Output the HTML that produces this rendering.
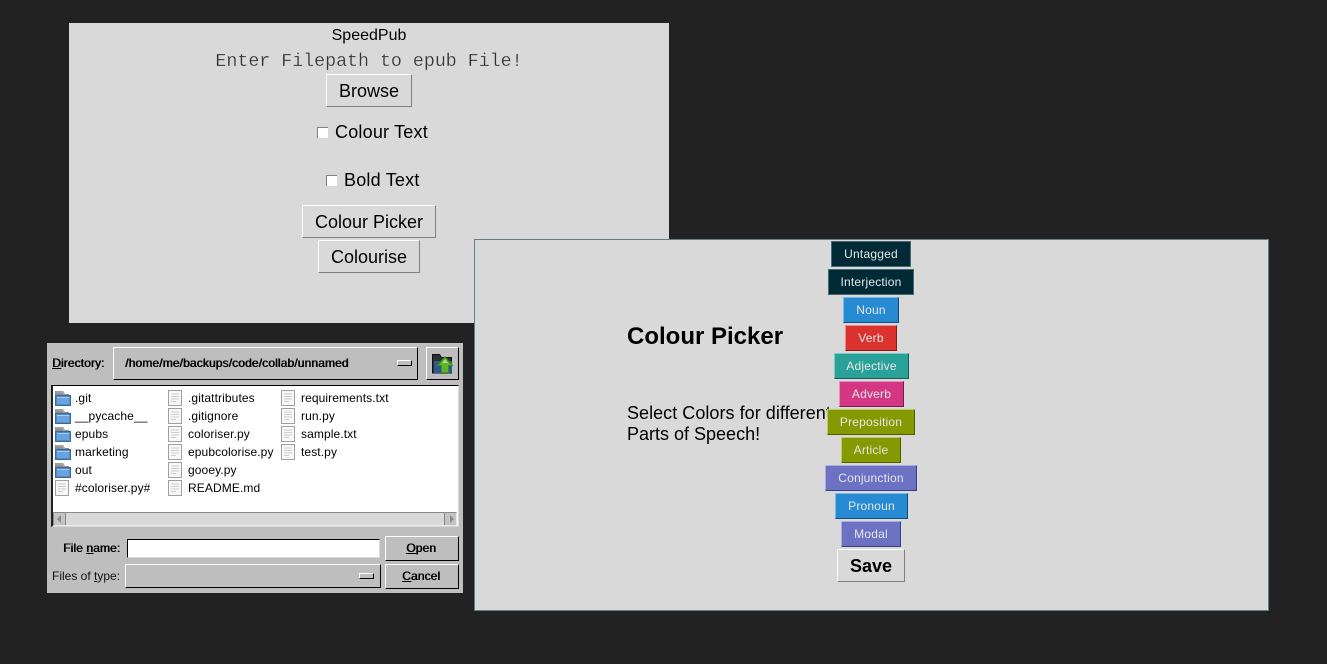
<!DOCTYPE html>
<html><head><meta charset="utf-8">
<style>
html,body{margin:0;padding:0;width:1327px;height:664px;overflow:hidden;background:#222222;}
body{position:relative;font-family:"Liberation Sans",sans-serif;color:#000;}
.a{position:absolute;box-sizing:border-box;white-space:nowrap;}
.win{background:#d9d9d9;}
.b{position:absolute;box-sizing:border-box;text-align:center;background:#d9d9d9;border:1px solid;border-color:#fff #7f7f7f #7f7f7f #fff;font-size:18px;color:#000;}
.c{position:absolute;box-sizing:border-box;width:80px;height:26px;line-height:24px;text-align:center;font-size:12px;color:#e6e6e6;border:1px solid;letter-spacing:.2px;}
.dl{position:absolute;box-sizing:border-box;background:#bebebe;border:1px solid;border-color:#fff #000 #000 #fff;}
.t{position:absolute;font-size:12px;line-height:14px;color:#000;white-space:nowrap;letter-spacing:.1px;}
.o{text-shadow:.6px 0 0 #000;}
.u{text-decoration:underline;}
.cb{position:absolute;width:11px;height:11px;box-sizing:border-box;background:#fff;border-top:1px solid #808080;border-left:1px solid #808080;}
.ind{position:absolute;width:15px;height:6px;box-sizing:border-box;border:1px solid;border-color:#fff #000 #000 #fff;background:#bebebe;}
svg{position:absolute;}
</style></head><body>
<svg width="0" height="0" style="position:absolute">
<symbol id="fo" viewBox="0 0 16 16"><path d="M0 15V1h8l2 3h4v3H0z" fill="#8f8f8f"/><path d="M1 2h6.500l2 3" fill="none" stroke="#b5b5b5"/><rect x=".5" y="5.500" width="15" height="10" fill="#4c8ccd" stroke="#3d6a99"/><rect x="2" y="7" width="12" height="7" fill="#6aa3dd"/><rect x="2" y="7" width="12" height="1" fill="#a9cbec"/></symbol>
<symbol id="fi" viewBox="0 0 14 16"><rect x=".5" y=".5" width="13" height="15" fill="#f8f8f8" stroke="#a0a0a0"/><path d="M3 4h8M3 6.500h8M3 9h8M3 11.500h5" stroke="#cdcdcd" fill="none"/></symbol>
</svg>

<!-- Main window -->
<div class="a win" style="left:69px;top:23px;width:600px;height:300px;"></div>
<div class="a" style="left:69px;width:600px;top:26px;text-align:center;font-size:16px;line-height:20px;">SpeedPub</div>
<div class="a" style="left:69px;width:600px;top:51px;text-align:center;font-family:'Liberation Mono',monospace;font-size:18.300px;line-height:22px;color:#333;-webkit-text-stroke:.25px #d9d9d9;">Enter Filepath to epub File!</div>
<div class="b" style="left:326px;top:74px;width:86px;height:33px;line-height:32px;">Browse</div>
<div class="cb" style="left:317px;top:127px;"></div>
<div class="a" style="left:335px;top:121px;font-size:18px;line-height:22px;letter-spacing:.2px;">Colour Text</div>
<div class="cb" style="left:326px;top:175px;"></div>
<div class="a" style="left:344px;top:169px;font-size:18px;line-height:22px;letter-spacing:.2px;">Bold Text</div>
<div class="b" style="left:302px;top:205px;width:134px;height:33px;line-height:32px;">Colour Picker</div>
<div class="b" style="left:318px;top:240px;width:102px;height:33px;line-height:32px;">Colourise</div>

<!-- File dialog -->
<div class="a" style="left:47px;top:343px;width:416px;height:250px;background:#bebebe;"></div>
<div class="t o" style="left:52px;top:356px;"><span class="u">D</span>irectory:</div>
<div class="dl" style="left:113px;top:347px;width:305px;height:33px;"></div>
<div class="t o" style="left:125px;top:356px;letter-spacing:.13px;">/home/me/backups/code/collab/unnamed</div>
<div class="ind" style="left:397px;top:360px;"></div>
<div class="dl" style="left:426px;top:347px;width:33px;height:33px;"></div>
<svg style="left:432px;top:353px;" width="22" height="22" viewBox="0 0 22 22"><path d="M.5 20V1.500h7l2 3h10v15.500z" fill="#2b2f36" stroke="#111"/><rect x="2" y="8" width="18" height="12" fill="#2a5a90"/><path d="M13 3l8.500 10H17v7H9v-7H4.500z" fill="#3b8f18"/><path d="M13 5l6 7h-3v7h-6v-7H7z" fill="#5eb52a"/><path d="M13 6l3 4h-6z" fill="#a9e07f"/></svg>

<div class="a" style="left:51px;top:385px;width:408px;height:142px;background:#fff;border-style:solid;border-width:1px 1px 1px 2px;border-color:#000 #d9d9d9 #d9d9d9 #222;"></div>
<!-- col 1 -->
<svg style="left:55px;top:390px" width="16" height="16"><use href="#fo"/></svg><div class="t" style="left:75px;top:391px;">.git</div>
<svg style="left:55px;top:408px" width="16" height="16"><use href="#fo"/></svg><div class="t" style="left:75px;top:409px;">__pycache__</div>
<svg style="left:55px;top:426px" width="16" height="16"><use href="#fo"/></svg><div class="t" style="left:75px;top:427px;">epubs</div>
<svg style="left:55px;top:444px" width="16" height="16"><use href="#fo"/></svg><div class="t" style="left:75px;top:445px;">marketing</div>
<svg style="left:55px;top:462px" width="16" height="16"><use href="#fo"/></svg><div class="t" style="left:75px;top:463px;">out</div>
<svg style="left:55px;top:480px" width="14" height="16"><use href="#fi"/></svg><div class="t" style="left:75px;top:481px;">#coloriser.py#</div>
<!-- col 2 -->
<svg style="left:168px;top:390px" width="14" height="16"><use href="#fi"/></svg><div class="t" style="left:188px;top:391px;">.gitattributes</div>
<svg style="left:168px;top:408px" width="14" height="16"><use href="#fi"/></svg><div class="t" style="left:188px;top:409px;">.gitignore</div>
<svg style="left:168px;top:426px" width="14" height="16"><use href="#fi"/></svg><div class="t" style="left:188px;top:427px;">coloriser.py</div>
<svg style="left:168px;top:444px" width="14" height="16"><use href="#fi"/></svg><div class="t" style="left:188px;top:445px;">epubcolorise.py</div>
<svg style="left:168px;top:462px" width="14" height="16"><use href="#fi"/></svg><div class="t" style="left:188px;top:463px;">gooey.py</div>
<svg style="left:168px;top:480px" width="14" height="16"><use href="#fi"/></svg><div class="t" style="left:188px;top:481px;">README.md</div>
<!-- col 3 -->
<svg style="left:281px;top:390px" width="14" height="16"><use href="#fi"/></svg><div class="t" style="left:301px;top:391px;">requirements.txt</div>
<svg style="left:281px;top:408px" width="14" height="16"><use href="#fi"/></svg><div class="t" style="left:301px;top:409px;">run.py</div>
<svg style="left:281px;top:426px" width="14" height="16"><use href="#fi"/></svg><div class="t" style="left:301px;top:427px;">sample.txt</div>
<svg style="left:281px;top:444px" width="14" height="16"><use href="#fi"/></svg><div class="t" style="left:301px;top:445px;">test.py</div>
<!-- scrollbar -->
<div class="a" style="left:53px;top:512px;width:404px;height:14px;background:#c4c4c4;border:1px solid;border-color:#8a8a8a #e8e8e8 #e8e8e8 #8a8a8a;"></div>
<div class="a" style="left:65px;top:513px;width:380px;height:12px;background:#d9d9d9;border-left:1px solid #888;border-right:1px solid #888;"></div>
<svg style="left:55px;top:514px" width="9" height="10"><path d="M6 1v8L2 5z" fill="#8a8a8a"/></svg>
<svg style="left:447px;top:514px" width="9" height="10"><path d="M3 1v8l4-4z" fill="#8a8a8a"/></svg>

<div class="t o" style="left:63px;top:541px;">File <span class="u">n</span>ame:</div>
<div class="a" style="left:127px;top:539px;width:253px;height:19px;background:#fff;border:1px solid;border-color:#000 #d9d9d9 #d9d9d9 #000;"></div>
<div class="dl t o" style="left:385px;top:536px;width:74px;height:25px;line-height:22px;text-align:center;padding-right:2px;"><span class="u">O</span>pen</div>
<div class="t" style="left:52px;top:569px;color:#111;letter-spacing:0;">Files of <span class="u">t</span>ype:</div>
<div class="dl" style="left:125px;top:564px;width:256px;height:24px;"></div>
<div class="ind" style="left:359px;top:573px;"></div>
<div class="dl t o" style="left:385px;top:564px;width:74px;height:25px;line-height:22px;text-align:center;padding-right:2px;"><span class="u">C</span>ancel</div>

<!-- Colour picker window -->
<div class="a win" style="left:474px;top:239px;width:795px;height:372px;border:1px solid #5f8085;"></div>
<div class="a" style="left:627px;top:323px;font-size:24px;font-weight:bold;line-height:28px;">Colour Picker</div>
<div class="a" style="left:627px;top:403px;font-size:18px;line-height:21px;"><span style="letter-spacing:.04px;">Select Colors for different</span><br>Parts of Speech!</div>

<div class="c" style="left:831px;top:241px;width:80px;background:#002b36;border-color:#4a6a73 #4a6a73 #4a6a73 #4a6a73;">Untagged</div>
<div class="c" style="left:828px;top:269px;width:86px;background:#002b36;border-color:#4a6a73;">Interjection</div>
<div class="c" style="left:843px;top:297px;width:56px;background:#268bd2;border-color:#7cb9e4 #0f4c78 #0f4c78 #7cb9e4;">Noun</div>
<div class="c" style="left:845px;top:325px;width:52px;background:#dc322f;border-color:#ee8a88 #8a1a18 #8a1a18 #ee8a88;">Verb</div>
<div class="c" style="left:834px;top:353px;width:75px;background:#2aa198;border-color:#7fcbc5 #125f59 #125f59 #7fcbc5;">Adjective</div>
<div class="c" style="left:839px;top:381px;width:65px;background:#d33682;border-color:#e88fba #80164a #80164a #e88fba;">Adverb</div>
<div class="c" style="left:827px;top:409px;width:88px;background:#859900;border-color:#bfcc66 #4f5c00 #4f5c00 #bfcc66;">Preposition</div>
<div class="c" style="left:841px;top:437px;width:60px;background:#859900;border-color:#bfcc66 #4f5c00 #4f5c00 #bfcc66;">Article</div>
<div class="c" style="left:825px;top:465px;width:92px;background:#6c71c4;border-color:#a9acdf #3a3e80 #3a3e80 #a9acdf;">Conjunction</div>
<div class="c" style="left:835px;top:493px;width:73px;background:#268bd2;border-color:#7cb9e4 #0f4c78 #0f4c78 #7cb9e4;">Pronoun</div>
<div class="c" style="left:841px;top:521px;width:60px;background:#6c71c4;border-color:#a9acdf #3a3e80 #3a3e80 #a9acdf;">Modal</div>
<div class="b" style="left:837px;top:549px;width:68px;height:33px;line-height:32px;font-weight:bold;">Save</div>
</body></html>
